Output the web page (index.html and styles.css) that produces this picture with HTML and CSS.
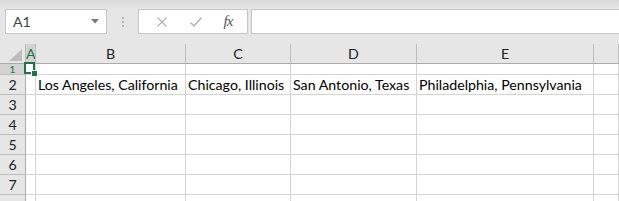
FILE: index.html
```html
<!DOCTYPE html>
<html lang="en">
<head>
  <meta charset="UTF-8">
  <title>Book1 - Excel</title>
  <link rel="stylesheet" href="styles.css">
</head>
<body>
  <div class="formula-bar">
    <div class="name-box">
      <span>A1</span>
      <svg class="caret" width="8" height="5" viewBox="0 0 8 5"><path d="M0 0h8L4 4.5z" fill="#7a7a7a"/></svg>
    </div>
    <div class="grip"><i></i><i></i><i></i></div>
    <div class="fx-buttons">
      <svg width="12" height="12" viewBox="0 0 12 12"><path d="M1.5 1.5l9 9M10.5 1.5l-9 9" stroke="#b3b3b3" stroke-width="1.3"/></svg>
      <svg width="14" height="12" viewBox="0 0 14 12"><path d="M1.5 6.5l3.5 3.5 7.5-8.5" stroke="#b3b3b3" stroke-width="1.5" fill="none"/></svg>
      <span class="fx">fx</span>
    </div>
    <div class="formula-input"></div>
  </div>

  <div class="sheet">
    <div class="corner"><svg width="13" height="12" viewBox="0 0 13 12"><path d="M13 0v12H0z" fill="#bdbdbd"/></svg></div>
    <div class="col-head active">A</div>
    <div class="col-head">B</div>
    <div class="col-head">C</div>
    <div class="col-head">D</div>
    <div class="col-head">E</div>
    <div class="col-head"></div>

    <div class="row-head short active">1</div>
    <div class="cell selected"></div>
    <div class="cell"></div><div class="cell"></div><div class="cell"></div><div class="cell"></div><div class="cell"></div>

    <div class="row-head">2</div>
    <div class="cell"></div>
    <div class="cell">Los Angeles, California</div>
    <div class="cell">Chicago, Illinois</div>
    <div class="cell">San Antonio, Texas</div>
    <div class="cell">Philadelphia, Pennsylvania</div>
    <div class="cell"></div>

    <div class="row-head">3</div>
    <div class="cell"></div><div class="cell"></div><div class="cell"></div><div class="cell"></div><div class="cell"></div><div class="cell"></div>
    <div class="row-head">4</div>
    <div class="cell"></div><div class="cell"></div><div class="cell"></div><div class="cell"></div><div class="cell"></div><div class="cell"></div>
    <div class="row-head">5</div>
    <div class="cell"></div><div class="cell"></div><div class="cell"></div><div class="cell"></div><div class="cell"></div><div class="cell"></div>
    <div class="row-head">6</div>
    <div class="cell"></div><div class="cell"></div><div class="cell"></div><div class="cell"></div><div class="cell"></div><div class="cell"></div>
    <div class="row-head">7</div>
    <div class="cell"></div><div class="cell"></div><div class="cell"></div><div class="cell"></div><div class="cell"></div><div class="cell"></div>
    <div class="row-head"></div>
    <div class="cell"></div><div class="cell"></div><div class="cell"></div><div class="cell"></div><div class="cell"></div><div class="cell"></div>
  </div>
</body>
</html>
```

FILE: styles.css
```css
body {
  margin: 0;
  background: #fff;
  font-family: Lato, "Liberation Sans", sans-serif;
  font-size: 14.2px;
  color: #000;
  overflow: hidden;
}

.formula-bar {
  height: 44px;
  box-sizing: border-box;
  padding: 9px 0 10px 5px;
  display: flex;
  align-items: stretch;
  background: linear-gradient(#d9d9d9, #e6e6e6 9px);
}

.name-box {
  width: 102px;
  box-sizing: border-box;
  border: 1px solid #c6c6c6;
  background: #fff;
  display: flex;
  align-items: center;
  justify-content: space-between;
  padding: 0 7px 0 7px;
  color: #444;
}

.grip {
  width: 31px;
  display: flex;
  flex-direction: column;
  align-items: center;
  justify-content: center;
  gap: 2px;
}

.grip i {
  width: 2px;
  height: 2px;
  background: #b5b5b5;
}

.fx-buttons {
  width: 110px;
  box-sizing: border-box;
  border: 1px solid #c6c6c6;
  background: #fff;
  display: flex;
  align-items: center;
  justify-content: space-around;
  padding: 0 4px 0 6px;
}

.fx {
  font-family: "Liberation Serif", serif;
  font-style: italic;
  font-size: 15px;
  color: #555;
  letter-spacing: -1px;
}

.formula-input {
  flex: 1;
  margin-left: 3px;
  border: 1px solid #c6c6c6;
  border-right: none;
  background: #fff;
}

.sheet {
  display: grid;
  grid-template-columns: 26px 10px 150px 105px 126px 177px 1fr;
  grid-template-rows: 20px 11px repeat(6, 20px) 12px;
}

.sheet > div {
  box-sizing: border-box;
  border-right: 1px solid #d4d4d4;
  border-bottom: 1px solid #d4d4d4;
  white-space: nowrap;
  overflow: hidden;
}

.corner {
  background: #e6e6e6;
  display: flex;
  align-items: flex-end;
  justify-content: flex-end;
  padding: 0 3px 2px 0;
}

.sheet > .corner,
.sheet > .col-head {
  border-right-color: #bdbdbd;
  border-bottom-color: #ababab;
}

.col-head {
  background: #e6e6e6;
  color: #222;
  text-align: center;
  line-height: 20px;
}

.sheet > .row-head {
  background: #e6e6e6;
  color: #222;
  text-align: center;
  line-height: 20px;
  border-right-color: #ababab;
  border-bottom-color: #bdbdbd;
}

.row-head.short {
  line-height: 10px;
  font-size: 10px;
}

.sheet > .active {
  background: #d2d2d2;
  color: #217346;
}

.cell {
  padding-left: 2px;
  line-height: 19px;
}

.sheet > .selected {
  overflow: visible;
  position: relative;
}

.selected::after {
  content: "";
  position: absolute;
  left: -2px;
  top: -2px;
  width: 11px;
  height: 12px;
  border: 2px solid #217346;
  box-sizing: border-box;
}

.selected::before {
  content: "";
  position: absolute;
  right: -3px;
  bottom: -3px;
  width: 5px;
  height: 5px;
  background: #217346;
  border: 1px solid #fff;
  z-index: 1;
}
```
